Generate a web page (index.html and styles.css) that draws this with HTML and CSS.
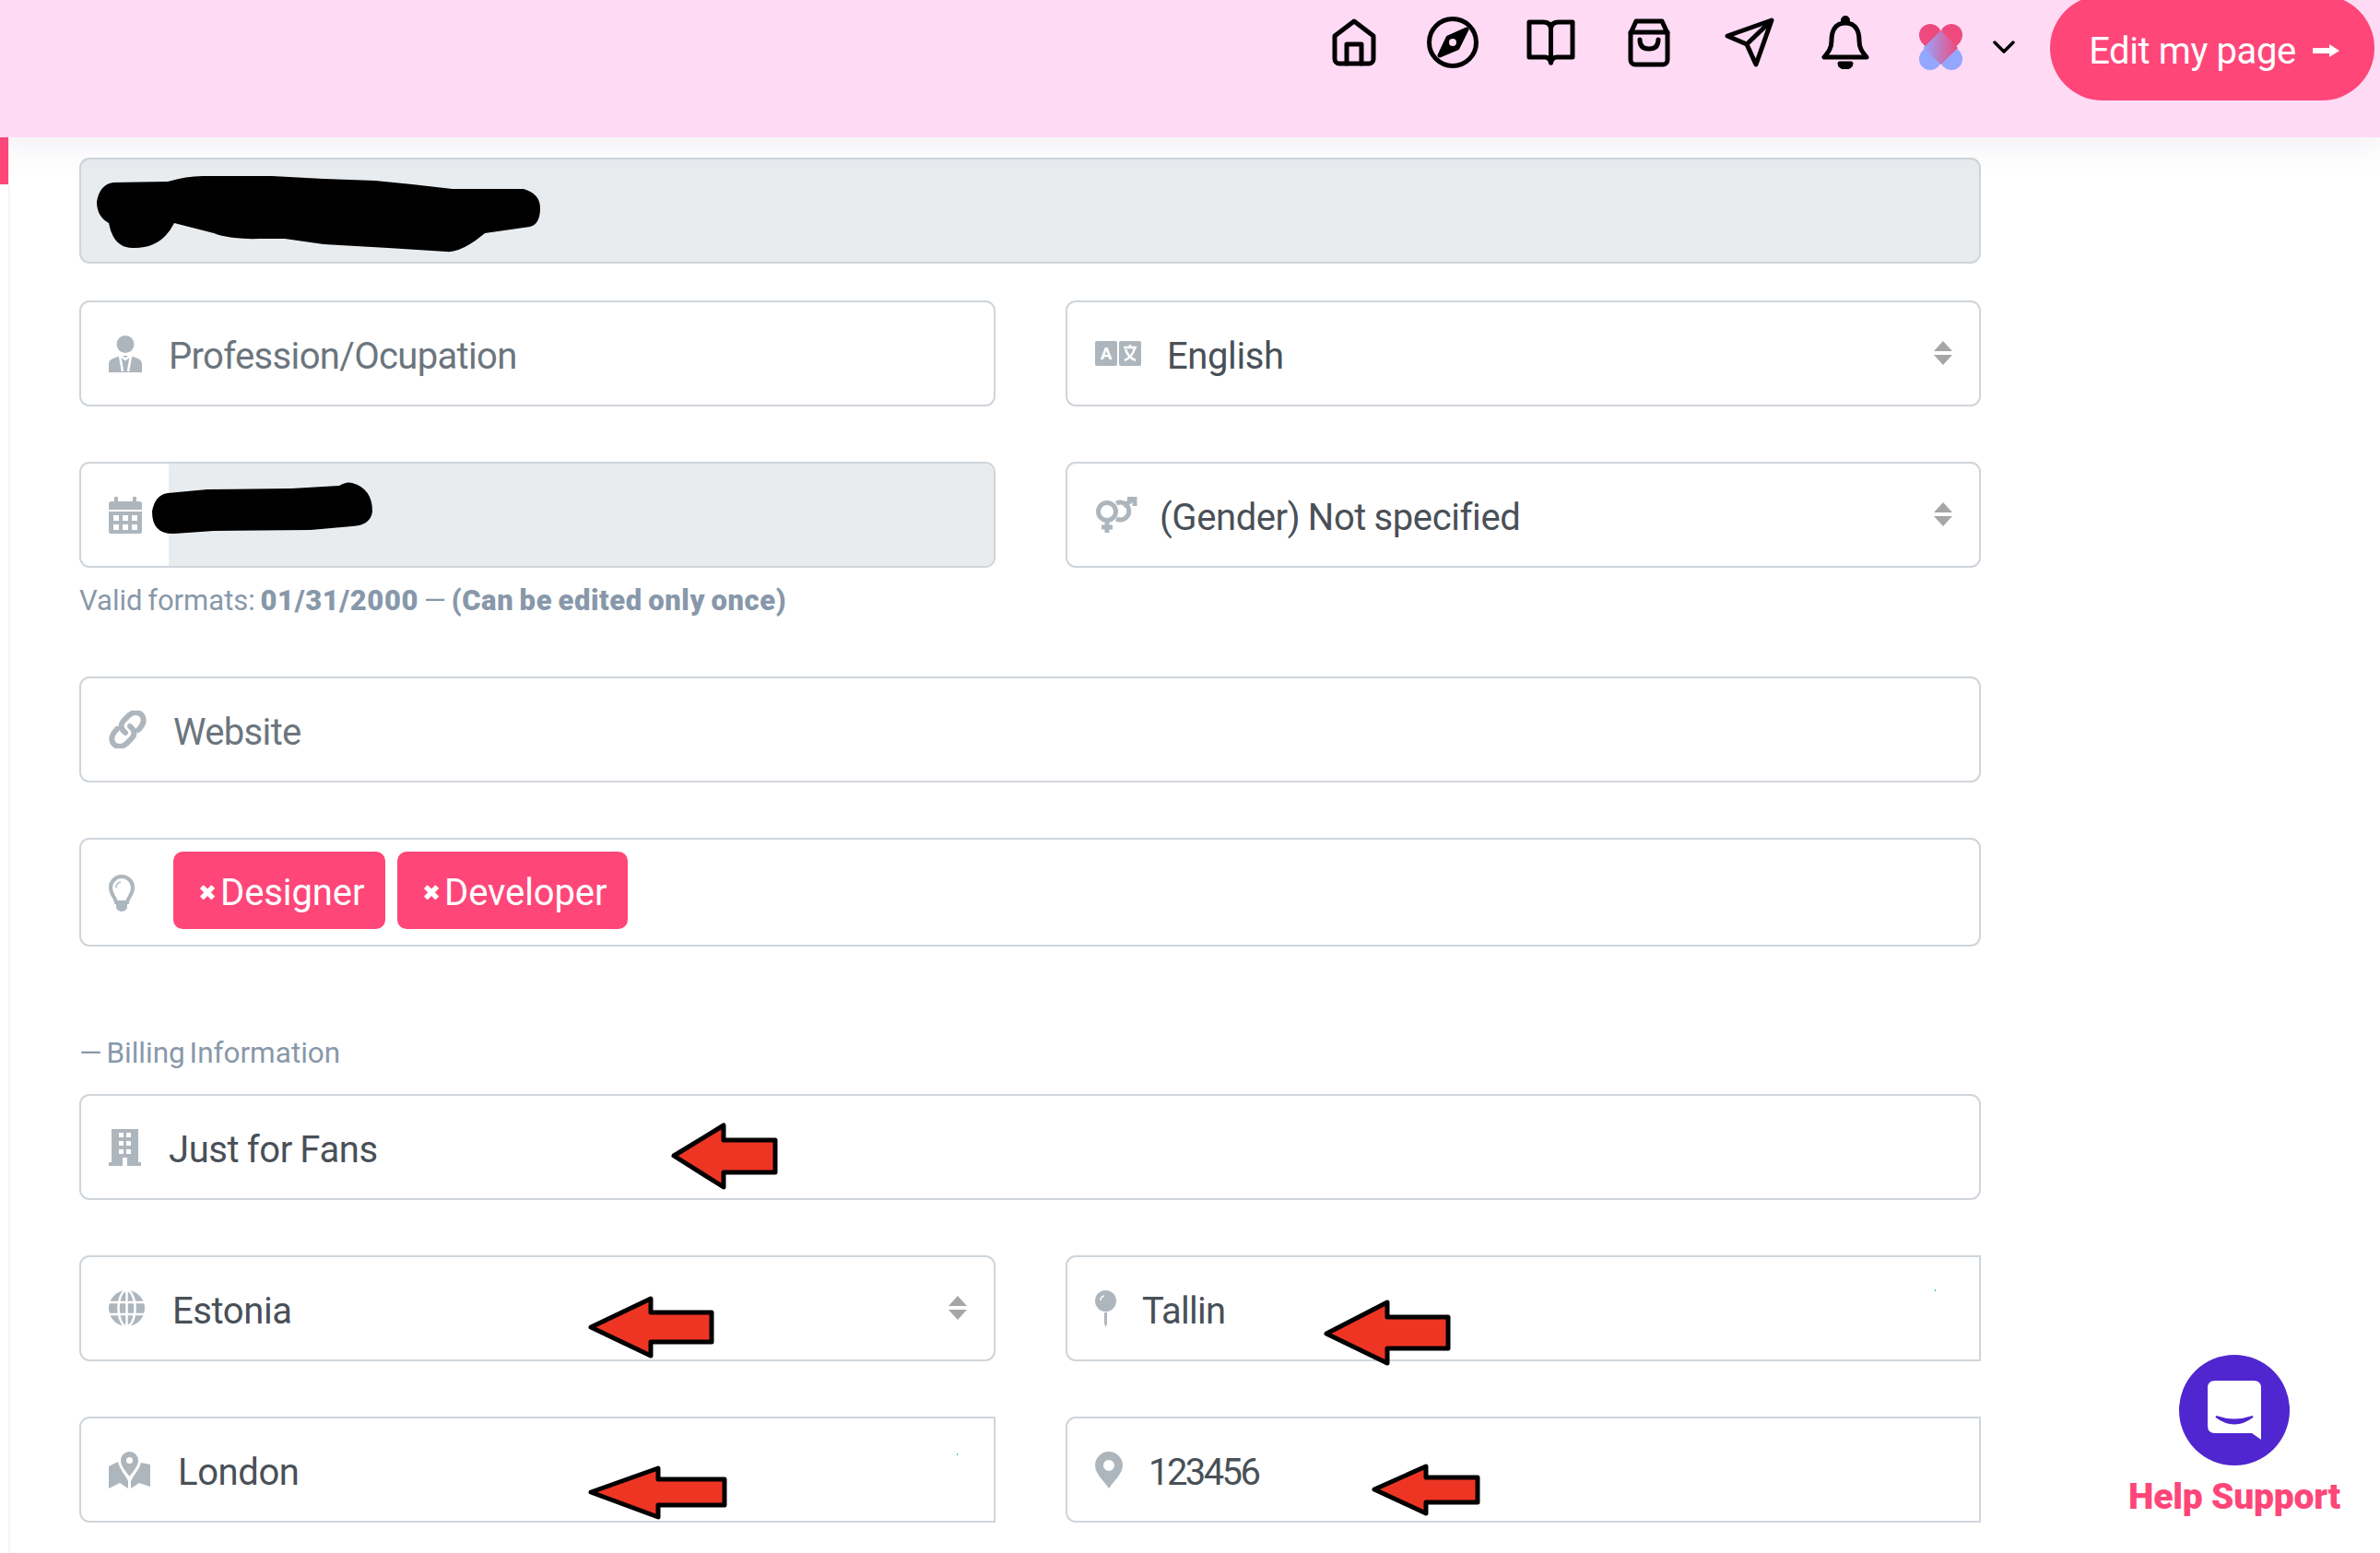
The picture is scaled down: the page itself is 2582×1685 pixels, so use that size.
FILE: index.html
```html
<!DOCTYPE html>
<html lang="en">
<head>
    <meta charset="UTF-8">
    <meta name="viewport" content="width=device-width, initial-scale=1.0">
    <title>Edit my page</title>
    <link rel="stylesheet" href="styles.css">
</head>
<body>
    <!-- Top bar -->
    <header class="topbar">
        <nav class="nav-icons">
            <svg class="nav-icon" width="48" height="52" viewBox="0 0 48 52"><path d="M3 19 L24 3 L45 19 V44 a5 5 0 0 1-5 5 H8 a5 5 0 0 1-5-5Z"/><path d="M16 49 V28 H32 V49"/></svg>
            <svg class="nav-icon" width="56" height="56" viewBox="0 0 56 56"><circle cx="28" cy="28" r="25.5"/><path class="solid" d="M43 14 L33 34 L14 42 L23 23Z"/><circle class="hole" cx="28" cy="28" r="4"/></svg>
            <svg class="nav-icon" width="53" height="50" viewBox="0 0 53 50"><path d="M3 3 H18 Q26 3 26.5 10 Q27 3 35 3 H50 V41 H33 Q28 41 26.5 47 Q25 41 20 41 H3Z"/><path d="M26.5 10 V47"/></svg>
            <svg class="nav-icon" width="46" height="53" viewBox="0 0 46 53"><path d="M3 16 V45 a5 5 0 0 0 5 5 H38 a5 5 0 0 0 5-5 V16 L37 3 H9Z"/><path d="M3 15 H43"/><path d="M13 23 Q13 33 23 33 Q33 33 33 23"/></svg>
            <svg class="nav-icon" width="54" height="54" viewBox="0 0 54 54"><path d="M3 20 L51 3 L34 51 L24 29Z"/><path d="M24 29 L50 4"/></svg>
            <svg class="nav-icon" width="52" height="58" viewBox="0 0 52 58"><circle class="solid" cx="26" cy="5" r="2.5"/><path d="M26 8 C14 8 11 18 11 27 C11 35 8 39 3 45 H49 C44 39 41 35 41 27 C41 18 38 8 26 8Z"/><path class="solid" d="M20 52 H32 A6 4 0 0 1 20 52Z"/></svg>
        </nav>
        <svg class="logo" width="47" height="50" viewBox="0 0 47 50">
            <defs>
                <linearGradient id="logoFade" x1="0" y1="0" x2="1" y2="0"><stop offset="0" stop-color="#94a7ff"/><stop offset="1" stop-color="#ee4a7d"/></linearGradient>
            </defs>
            <circle cx="12" cy="38" r="12" fill="#94a7ff"/><circle cx="35" cy="38" r="12" fill="#94a7ff"/>
            <polygon points="2,31 45,31 23.5,8" fill="#94a7ff"/>
            <circle cx="12" cy="12" r="12" fill="#ee4a7d"/><circle cx="35" cy="12" r="12" fill="#ee4a7d"/>
            <polygon points="2,19 45,19 23.5,44" fill="#ee4a7d"/>
            <polygon points="23.5,7 42,26 23.5,44 4.5,26" fill="url(#logoFade)"/>
        </svg>
        <svg class="chevron" width="24" height="14" viewBox="0 0 24 14"><polyline points="2,2 12,12 22,2"/></svg>
        <a class="edit-btn"><span>Edit my page</span>
            <svg width="29" height="16" viewBox="0 0 29 16"><path d="M0 5 H18 V1 L29 8 L18 15 V11 H0Z" fill="#fff"/></svg>
        </a>
    </header>

    <div class="page">
        <aside class="rail"><div class="rail-active"></div></aside>

        <main class="form">
            <div class="field field-disabled gap-40"></div>

            <div class="two-cols gap-60">
                <div class="field">
                    <svg class="field-icon" width="36" height="40" viewBox="0 0 36 40"><circle cx="18" cy="9.5" r="9.5"/><path d="M0 40 V31 Q0 26 7 24 L13 22 H23 L29 24 Q36 26 36 31 V40Z"/><path class="icon-cut" d="M12 22 L15 39 M24 22 L21 39 M13 22 L18 26 L23 22"/></svg>
                    <span class="placeholder">Profession/Ocupation</span>
                </div>
                <div class="field">
                    <svg class="field-icon gap-english" width="50" height="27" viewBox="0 0 50 27"><rect width="24" height="27" rx="2"/><rect x="26" width="24" height="27" rx="2"/><text class="icon-letter" x="12" y="20">A</text><path class="icon-cut" d="M31 7 H45 M38 4 V7 M43 8 Q40 18 32 21 M33 9 Q36 18 44 21"/></svg>
                    <span class="value">English</span>
                    <svg class="sort" width="20" height="26" viewBox="0 0 20 26"><polygon points="10,0 20,11 0,11"/><polygon points="0,15 20,15 10,26"/></svg>
                </div>
            </div>

            <div class="two-cols">
                <div>
                    <div class="field field-split">
                        <svg class="field-icon" width="36" height="40" viewBox="0 0 36 40"><path d="M6 0 H10 V5 H26 V0 H30 V5 H33 Q36 5 36 8 V14 H0 V8 Q0 5 3 5 H6Z"/><path fill-rule="evenodd" d="M0 16 H36 V38 Q36 40 34 40 H2 Q0 40 0 38Z M5 20 V26 H11 V20Z M15 20 V26 H21 V20Z M25 20 V26 H31 V20Z M5 30 V36 H11 V30Z M15 30 V36 H21 V30Z M25 30 V36 H31 V30Z"/></svg>
                        <div class="split-fill"></div>
                    </div>
                    <p class="hint">Valid formats: <b>01/31/2000</b> — <b>(Can be edited only once)</b></p>
                </div>
                <div class="field">
                    <svg class="field-icon gap-gender" width="46" height="40" viewBox="0 0 46 40"><g class="icon-line"><circle cx="13" cy="16" r="9.5"/><path d="M13 26 V39 M7 33 H19"/><path d="M23 7 A9.5 9.5 0 1 1 23 24"/><path d="M31 10 L42 2 M35 2 H43 V10"/></g></svg>
                    <span class="value">(Gender) Not specified</span>
                    <svg class="sort" width="20" height="26" viewBox="0 0 20 26"><polygon points="10,0 20,11 0,11"/><polygon points="0,15 20,15 10,26"/></svg>
                </div>
            </div>

            <div class="field gap-60 field-website">
                <svg class="field-icon gap-link" width="41" height="41" viewBox="0 0 41 41"><g class="icon-line thick"><path d="M18 24 C13 20 12 16 16 11 L22 5 C28 0 35 2 37 7 C39 12 37 16 32 21"/><path d="M23 17 C28 21 29 26 25 30 L19 36 C13 41 6 39 4 34 C2 29 4 25 9 20"/></g></svg>
                <span class="placeholder">Website</span>
            </div>

            <div class="field field-tags">
                <svg class="field-icon gap-bulb" width="28" height="40" viewBox="0 0 28 40"><path class="bulb" d="M14 2 A12 12 0 0 0 2 14 C2 22 7 24 8 30 H20 C21 24 26 22 26 14 A12 12 0 0 0 14 2Z"/><path class="bulb-shine" d="M8 14 A6 6 0 0 1 13 8"/><path d="M8 32 H20 V36 Q18 40 14 40 Q10 40 8 36Z"/></svg>
                <span class="tag tag-designer"><i class="tag-x">✖</i>Designer</span>
                <span class="tag tag-developer"><i class="tag-x">✖</i>Developer</span>
            </div>

            <h2 class="section-title">— Billing Information</h2>

            <div class="field gap-60">
                <svg class="field-icon gap-building" width="35" height="40" viewBox="0 0 35 40"><path fill-rule="evenodd" d="M3 0 H32 V36 H35 V40 H0 V36 H3Z M11 4 V9 H16 V4Z M19 4 V9 H24 V4Z M11 13 V18 H16 V13Z M19 13 V18 H24 V13Z M11 22 V27 H16 V22Z M19 22 V27 H24 V22Z M15 31 V40 H20 V31Z"/></svg>
                <span class="value">Just for Fans</span>
            </div>

            <div class="two-cols gap-60">
                <div class="field">
                    <svg class="field-icon gap-globe" width="39" height="39" viewBox="0 0 39 39"><circle class="globe-fill" cx="19.5" cy="19.5" r="19.5"/><g class="icon-cut"><ellipse cx="19.5" cy="19.5" rx="9" ry="19.5"/><path d="M0 13 H39 M0 26 H39 M19.5 0 V39"/></g></svg>
                    <span class="value">Estonia</span>
                    <svg class="sort" width="20" height="26" viewBox="0 0 20 26"><polygon points="10,0 20,11 0,11"/><polygon points="0,15 20,15 10,26"/></svg>
                </div>
                <div class="field field-square">
                    <svg class="field-icon gap-pin" width="23" height="40" viewBox="0 0 23 40"><circle cx="11.5" cy="11.5" r="11.5"/><path d="M10 24 H13 V36 L11.5 40 L10 36Z"/><path class="icon-shine" d="M6 11 A5 5 0 0 1 10 6"/></svg>
                    <span class="value value-tallin">Tallin</span>
                </div>
            </div>

            <div class="two-cols">
                <div class="field field-square">
                    <svg class="field-icon gap-map" width="45" height="40" viewBox="0 0 45 40"><path fill-rule="evenodd" d="M22.5 0 A9.5 9.5 0 0 1 32 9.5 C32 16 26 22 22.5 27 C19 22 13 16 13 9.5 A9.5 9.5 0 0 1 22.5 0Z M22.5 6 A3.5 3.5 0 1 0 22.5 13 A3.5 3.5 0 1 0 22.5 6Z"/><path d="M0 16 L10 11 C12 20 18 25 21 32 V40 L12 34 L0 40Z M45 14 L35 12 C33 20 27 25 24 32 V40 L33 34 L45 38Z"/></svg>
                    <span class="value">London</span>
                </div>
                <div class="field field-square">
                    <svg class="field-icon gap-marker" width="30" height="40" viewBox="0 0 30 40"><path fill-rule="evenodd" d="M15 0 A15 15 0 0 1 30 15 C30 24 20 32 15 40 C10 32 0 24 0 15 A15 15 0 0 1 15 0Z M15 9 A6 6 0 1 0 15 21 A6 6 0 1 0 15 9Z"/></svg>
                    <span class="value value-digits">123456</span>
                </div>
            </div>
        </main>
    </div>

    <!-- Floating help button -->
    <div class="help">
        <div class="help-circle">
            <svg width="58" height="64" viewBox="0 0 58 64"><path d="M8 0 H50 Q58 0 58 8 V64 L48 57 H8 Q0 57 0 49 V8 Q0 0 8 0Z" fill="#fff"/><path d="M9 39 Q29 54 49 39 Q29 46 9 39Z" fill="#4f26cf" stroke="#4f26cf" stroke-width="2"/></svg>
        </div>
        <span class="help-label">Help Support</span>
    </div>

    <!-- Hand-drawn marks on top of the page -->
    <svg class="marks" width="2582" height="1685" viewBox="0 0 2582 1685">
        <path class="scribble" d="M105 219 Q108 200 123 198 L182 197 Q205 190 225 191 L295 191 L351 194 Q380 195 407 196 Q450 200 491 205 L568 205 Q586 210 586 226 Q586 243 575 246 L526 253 Q500 275 484 273 L421 269 L351 265 L309 259 L281 259 Q250 260 232 253 L189 242 Q175 270 144 269 Q123 269 118 242 Q105 235 105 219Z"/>
        <path class="scribble" d="M165 555 Q168 537 182 535 L225 531 L316 530 L368 527 Q376 522 382 524 Q404 530 404 555 Q402 570 382 571 L337 575 L232 576 L189 579 Q165 580 165 555Z"/>
        <polygon class="arrow" points="731,1254 785,1221 785,1237 841,1237 841,1272 785,1272 785,1288"/>
        <polygon class="arrow" points="641,1440 706,1409 706,1424 772,1424 772,1456 706,1456 706,1471"/>
        <polygon class="arrow" points="641,1619 714,1593 714,1605 786,1605 786,1633 714,1633 714,1646"/>
        <polygon class="arrow" points="1439,1447 1505,1413 1505,1429 1571,1429 1571,1463 1505,1463 1505,1479"/>
        <polygon class="arrow" points="1491,1616 1547,1591 1547,1603 1603,1603 1603,1630 1547,1630 1547,1642"/>
        <rect class="speck" x="2099" y="1399" width="1" height="2"/>
        <rect class="speck" x="1038" y="1577" width="1" height="2"/>
    </svg>
</body>
</html>
```

FILE: styles.css
```css
* { box-sizing: border-box; }
body { margin: 0; height: 1685px; overflow: hidden; position: relative; background: #fff; font-family: Roboto, "Liberation Sans", sans-serif; color: #495057; }

/* top bar */
.topbar { position: relative; z-index: 1; height: 149px; background: #fedaf5; box-shadow: 0 8px 34px rgba(130, 130, 170, 0.13); display: flex; align-items: flex-start; padding-right: 6px; }
.nav-icons { margin-left: 1445px; width: 582px; display: flex; align-items: center; height: 92px; }
.nav-icon { flex: none; fill: none; stroke: #000; stroke-width: 5; stroke-linejoin: round; stroke-linecap: round; }
.nav-icon:nth-child(2) { margin-left: 55px; }
.nav-icon:nth-child(3) { margin-left: 52px; }
.nav-icon:nth-child(4) { margin-left: 57px; }
.nav-icon:nth-child(5) { margin-left: 59px; }
.nav-icon:nth-child(6) { margin-left: 51px; }
.nav-icon .solid { fill: #000; }
.nav-icon .hole { fill: #fedaf5; stroke: none; }
.logo { margin-left: 55px; margin-top: 26px; }
.chevron { margin-left: 33px; margin-top: 44px; fill: none; stroke: #000; stroke-width: 3.5; stroke-linecap: round; stroke-linejoin: round; }
.edit-btn { margin-left: 38px; margin-top: -5px; width: 352px; height: 114px; border-radius: 57px; background: #fe4679; color: #fff; font-size: 40px; letter-spacing: -0.4px; display: flex; align-items: center; justify-content: center; gap: 18px; padding: 6px 0 0 4px; }

/* page */
.page { display: flex; }
.rail { width: 9px; height: 1536px; box-shadow: 1px 0 3px rgba(0, 0, 0, 0.08); flex: none; }
.rail-active { height: 51px; background: #fe4679; }
.form { width: 2063px; margin-left: 77px; padding-top: 22px; }

.two-cols { display: grid; grid-template-columns: 994px 993px; column-gap: 76px; }
.gap-40 { margin-bottom: 40px; }
.gap-60 { margin-bottom: 60px; }

/* fields */
.field { height: 115px; border: 2px solid #cfd5da; border-radius: 11px; background: #fff; display: flex; align-items: center; padding-left: 30px; font-size: 40px; letter-spacing: -0.4px; word-spacing: -1px; overflow: hidden; }
.field > span { padding-top: 5px; }
.field-disabled { background: #e9ecef; }
.field-split { padding-left: 0; }
.field-split .field-icon { margin-left: 30px; margin-right: 29px; flex: none; }
.split-fill { align-self: stretch; flex: 1; background: #e9ecef; }
.field-square { border-radius: 11px 0 0 11px; }
.field-tags { height: 118px; }
.field-website { margin-top: 64px; }

.field-icon { fill: #aeb6bd; flex: none; margin-right: 29px; }
.gap-english { margin-right: 28px; }
.gap-gender { margin-right: 24px; }
.gap-link { margin-right: 29px; }
.gap-bulb { margin-right: 42px; margin-top: 2px; }
.gap-building { margin-right: 30px; }
.gap-globe { margin-right: 30px; }
.gap-pin { margin-right: 28px; }
.gap-map { margin-right: 30px; }
.gap-marker { margin-right: 28px; }

.icon-line { fill: none; stroke: #aeb6bd; stroke-width: 5; }
.icon-line.thick { stroke-width: 6; stroke-linecap: round; }
.icon-letter { fill: #fff; font-size: 19px; font-weight: 700; text-anchor: middle; }
.icon-cut { fill: none; stroke: #fff; stroke-width: 2.5; }
.icon-shine { fill: none; stroke: #fff; stroke-width: 1.5; }
.globe-fill { fill: #aeb6bd; }
.bulb { fill: none; stroke: #aeb6bd; stroke-width: 4; }
.bulb-shine { fill: none; stroke: #aeb6bd; stroke-width: 1.5; }

.placeholder { color: #6c757d; letter-spacing: -0.65px; }
.value { color: #495057; }
.value-digits { letter-spacing: -2.6px; }
.value-tallin { letter-spacing: -0.7px; }
.sort { fill: #a6a6a6; margin-left: auto; margin-right: 29px; margin-top: -2px; }

.hint { margin: 18px 0 0; font-size: 31px; line-height: 36px; word-spacing: -2px; color: #8898aa; }
.hint b { font-weight: 900; letter-spacing: 0.6px; }

.tag { height: 84px; border-radius: 10px; background: #fe4679; color: #fff; font-size: 40px; letter-spacing: -0.1px; display: flex; align-items: center; padding: 3px 0 0 27px; margin-right: 13px; margin-top: -4px; }
.tag-designer { width: 230px; }
.tag-developer { width: 250px; }
.tag-x { font-style: normal; font-size: 24px; margin-right: 4px; font-family: "DejaVu Sans", sans-serif; }

.section-title { margin: 96px 0 24px; height: 40px; font-size: 31.5px; line-height: 40px; font-weight: 400; word-spacing: -3px; color: #8898aa; }

/* help button */
.help { position: absolute; right: 43px; top: 1470px; width: 230px; display: flex; flex-direction: column; align-items: center; }
.help-circle { width: 120px; height: 120px; border-radius: 50%; background: #4f26cf; display: flex; align-items: center; justify-content: center; }
.help-label { margin-top: 12px; font-size: 39px; line-height: 44px; font-weight: 900; letter-spacing: -0.2px; color: #fe4679; white-space: nowrap; }

/* marks */
.marks { position: absolute; left: 0; top: 0; z-index: 2; pointer-events: none; }
.scribble { fill: #000; }
.arrow { fill: #ee3524; stroke: #000; stroke-width: 5; stroke-linejoin: round; }
.speck { fill: #30c0b0; }
```
